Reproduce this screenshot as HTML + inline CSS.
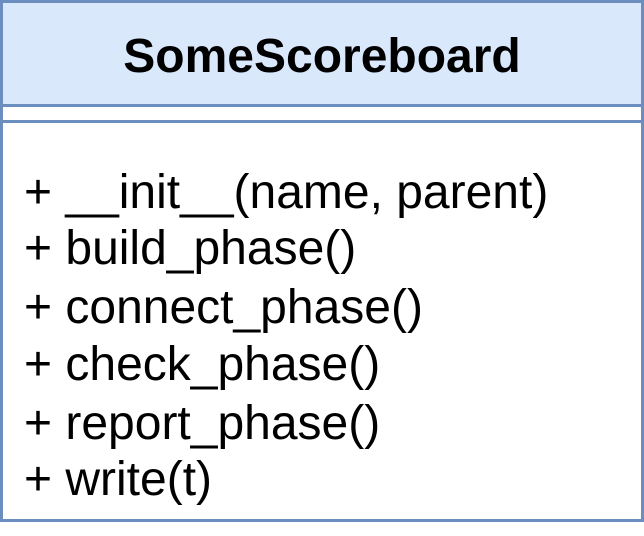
<!DOCTYPE html><html><head><style>
body{margin:0;width:644px;height:536px;background:#fff;position:relative;font-family:"Liberation Sans",sans-serif;}
.box{position:absolute;left:0;top:0;width:638px;height:516px;border:3px solid #6c8ebf;}
.hd{position:absolute;left:3px;top:3px;width:638px;height:101px;background:#dae8fc;}
.ln{position:absolute;left:0;width:644px;height:3px;background:#6c8ebf;}
.t{position:absolute;left:0;width:644px;text-align:center;top:29px;font-size:48px;font-weight:bold;line-height:56px;color:#000;}
.r{position:absolute;left:24px;font-size:48px;line-height:56px;color:#000;white-space:pre;}
</style></head><body>
<div class="hd"></div>
<div class="box"></div>
<div class="ln" style="top:104px"></div>
<div class="ln" style="top:120px"></div>
<div class="t">SomeScoreboard</div>
<div class="r" style="top:165px">+ __init__(name, parent)</div>
<div class="r" style="top:221px">+ build_phase()</div>
<div class="r" style="top:280px">+ connect_phase()</div>
<div class="r" style="top:337px">+ check_phase()</div>
<div class="r" style="top:396px">+ report_phase()</div>
<div class="r" style="top:452px">+ write(t)</div>
</body></html>
